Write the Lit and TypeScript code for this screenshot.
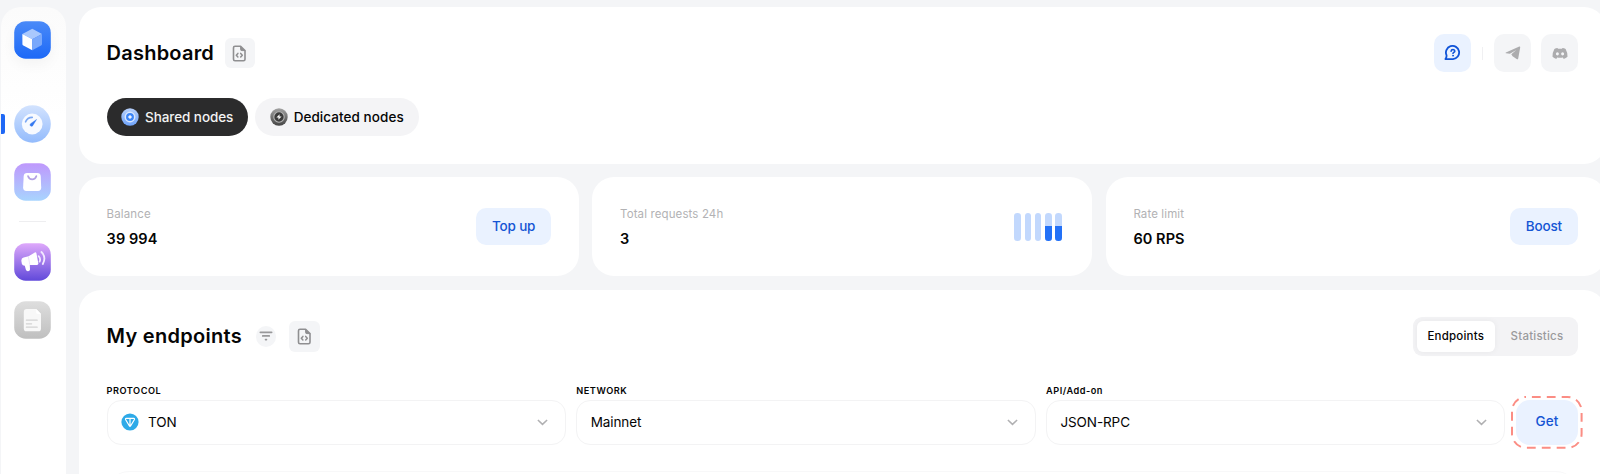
import { LitElement, html, css, svg } from 'lit';
import { customElement, property } from 'lit/decorators.js';

const codeFile = html`<svg width="15" height="17" viewBox="0 0 15 17" fill="none" stroke="#8f8f91" stroke-width="1.6" stroke-linecap="round" stroke-linejoin="round">
  <path d="M3 1.2H8.6L13 5.6V14.2Q13 15.7 11.5 15.7H3Q1.5 15.7 1.5 14.2V2.7Q1.5 1.2 3 1.2Z"/>
  <path d="M8.6 1.4V4.4Q8.6 5.6 9.8 5.6H12.8" fill="#8f8f91" stroke-width="1"/>
  <path d="M5.9 8.4L4.3 10.2L5.9 12M8.7 8.4L10.3 10.2L8.7 12" stroke-width="1.5"/></svg>`;

const chevron = html`<svg width="11" height="7" viewBox="0 0 11 7" fill="none" stroke="#b0b0b2" stroke-width="1.5"><path d="M.9 1L5.5 5.4L10.1 1"/></svg>`;

const shell = (id: string, stops: [string, string], body: unknown, round = 11.5) => html`
  <svg width="37" height="38" viewBox="0 0 37 38">
    <defs><linearGradient id=${id} x1="0" y1="0" x2="0" y2="1"><stop stop-color=${stops[0]}/><stop offset="1" stop-color=${stops[1]}/></linearGradient></defs>
    <rect x=".2" y=".2" width="36.6" height="37.5" rx=${round} fill="url(#${id})"/>
    ${body}
  </svg>`;

const logo = shell('logo', ['#4a8af8', '#1d69f7'], svg`
  <path d="M18.3 7.8L28 13L18.3 18.3L8.4 13Z" fill="#a9c8fd"/>
  <path d="M8.4 13L18.3 18.3V29.3L9.4 24.6Q8.4 24 8.4 23Z" fill="#fff"/>
  <path d="M28 13L18.3 18.3V29.3L27 24.6Q28 24 28 23Z" fill="#79a8fb"/>`);

const gauge = shell('gauge', ['#d3e3fe', '#93bbfc'], svg`
  <circle cx="18.2" cy="19" r="10.4" fill="#f7faff"/>
  <path d="M11.6 16.8Q13.2 12.4 18.2 12.3" fill="none" stroke="#7ba8f4" stroke-width="1.7" stroke-linecap="round"/>
  <path d="M22.6 14.4L19 20.2A1.5 1.5 0 1 1 16.8 18.5Z" fill="#3478f0" stroke="#3478f0" stroke-width=".4" stroke-linejoin="round"/>`, 18.6);

const bag = shell('bag', ['#bf98fc', '#a8d4fe'], svg`
  <path d="M13 10H23.3Q26.5 10 26.7 13L27.2 24.6Q27.2 28 24 28H12.4Q9.1 28 9.1 24.6L9.7 13Q9.9 10 13 10Z" fill="#fff"/>
  <path d="M14 13Q15 16.4 18.2 16.4T22.4 13" fill="none" stroke="#b3a1e4" stroke-width="1.7" stroke-linecap="round"/>`);

const megaphone = shell('mega', ['#dfa9fb', '#6149da'], svg`
  <path d="M7.4 18.2Q7 15.4 9.6 14.6L14.6 13.3L20.8 9.4Q22.1 8.8 22.4 10.2L24.4 20.6Q24.4 22 23 22L15.8 21.9L16 26.5Q15.8 28.2 14 28.2Q12.4 28.3 11.9 26.8L10.8 22.8Q8.4 22.8 7.9 21Z" fill="#fff"/>
  <path d="M14.4 13.6L15.8 21.8" stroke="#eadbfa" stroke-width=".8"/>
  <path d="M24.6 13.1Q27 15.5 25.6 18.6M27.4 9Q32.6 14 28.8 21" fill="none" stroke="#f2e9ff" stroke-width="1.8" stroke-linecap="round"/>`);

const doc = shell('doc', ['#dedede', '#bfbfbf'], svg`
  <path d="M12.6 8H22.2L27 13V27.4Q27 30.3 24.2 30.3H12.6Q9.8 30.3 9.8 27.4V10.9Q9.8 8 12.6 8Z" fill="#f8f8f8"/>
  <path d="M22.2 8L27 13H24Q22.2 13 22.2 11.2Z" fill="#fff"/>
  <path d="M12.4 19.2H23.2M12.4 22.8H17.6M12.4 26.2H23.2" stroke="#d2d2d2" stroke-width="1.2" stroke-linecap="round"/>`);

const sharedIcon = html`<svg width="18" height="18" viewBox="0 0 18 18">
  <defs><linearGradient id="sh" x1="0" y1="0" x2="0" y2="1"><stop stop-color="#b7d0fb"/><stop offset="1" stop-color="#6fa3fa"/></linearGradient></defs>
  <circle cx="9" cy="9" r="8.7" fill="url(#sh)"/><circle cx="9" cy="9" r="4.7" fill="#3d86f8" stroke="#d9e7fe" stroke-width="1.5"/>
  <path d="M9 7.2L9.7 8.3L10.8 9L9.7 9.7L9 10.8L8.3 9.7L7.2 9L8.3 8.3Z" fill="#fff" stroke="#fff" stroke-width=".5"/></svg>`;

const dedicatedIcon = html`<svg width="18" height="18" viewBox="0 0 18 18">
  <defs><linearGradient id="de" x1="0" y1="0" x2="0" y2="1"><stop stop-color="#a3a3a3"/><stop offset="1" stop-color="#444"/></linearGradient></defs>
  <circle cx="9" cy="9" r="8.7" fill="url(#de)"/><circle cx="9" cy="9" r="5.2" fill="#3b3b3b" stroke="#b5b5b5" stroke-width="1.1"/>
  <path d="M9.7 6.2L6.4 9.5H8.6L8.3 11.8L11.6 8.5H9.4Z" fill="#fff"/></svg>`;

const tonIcon = html`<svg width="18" height="18" viewBox="0 0 18 18"><circle cx="9" cy="9" r="8.6" fill="#2eaae8"/>
  <path d="M5.3 5.3H12.7Q13.9 5.5 13.3 6.7L9.4 13.2Q9 13.7 8.6 13.2L4.7 6.7Q4.1 5.5 5.3 5.3ZM9 5.3V13" fill="none" stroke="#fff" stroke-width="1.2" stroke-linejoin="round"/></svg>`;

const helpIcon = html`<svg width="17" height="16" viewBox="0 0 17 16" fill="none" stroke="#0f53d8" stroke-linecap="round" stroke-linejoin="round">
  <path d="M2.5 10.2A6.6 6.6 0 1 1 9 14.1H1.4Q2.8 12.4 2.5 10.2Z" stroke-width="1.8"/>
  <path d="M7.1 6.2Q7.2 4.5 9 4.5Q10.8 4.6 10.8 6.1Q10.7 7.2 9.5 7.6Q9 7.9 9 8.5" stroke-width="1.6"/><circle cx="9" cy="10.7" r=".5" fill="#0f53d8" stroke-width=".9"/></svg>`;

const telegramIcon = html`<svg width="16" height="14" viewBox="0 0 16 14"><path d="M.9 6.4L14.3 .6Q15.3 .3 15.2 1.4L13.2 12.4Q12.9 13.8 11.6 13.1L7.6 10.2L6.3 8.2L11.3 4.1L4.9 7.7L1 7.3Q0 6.9 .9 6.4Z" fill="#acacae"/></svg>`;

const discordIcon = html`<svg width="16" height="13" viewBox="0 0 16 13"><path fill-rule="evenodd" d="M5.5 .9L6 1.8Q8 1.5 10 1.8L10.5 .9Q12.1 1 13.6 1.9Q15.6 5.2 15.5 9.8Q13.9 11.4 11.7 11.9L10.9 10.5Q8 11.2 5.1 10.5L4.3 11.9Q2.1 11.4 .5 9.8Q.4 5.2 2.4 1.9Q3.9 1 5.5 .9ZM5.4 5.2A1.5 1.6 0 1 0 5.4 8.4A1.5 1.6 0 1 0 5.4 5.2ZM10.6 5.2A1.5 1.6 0 1 0 10.6 8.4A1.5 1.6 0 1 0 10.6 5.2Z" fill="#acacae"/></svg>`;

@customElement('select-field')
class SelectField extends LitElement {
  @property() label = '';
  @property() value = '';
  @property({ attribute: false }) icon: unknown = null;
  static styles = css`
    :host { display: block; flex: 1; }
    .label { height: 19.2px; line-height: 19.6px; font-size: 9.2px; font-weight: 600; letter-spacing: .5px; }
    .box { height: 44.5px; box-sizing: border-box; border: 1px solid #f3f3f4; border-radius: 14px; display: flex; align-items: center; padding: 0 17px 0 13.4px; }
    .value { flex: 1; font-size: 13.5px; letter-spacing: -.1px; }
    .icon { margin: 0 9px 0 0; display: flex; }
  `;
  render() {
    return html`<div class="label">${this.label}</div>
      <div class="box">${this.icon ? html`<span class="icon">${this.icon}</span>` : ''}<span class="value">${this.value}</span>${chevron}</div>`;
  }
}

@customElement('app-root')
class AppRoot extends LitElement {
  static styles = css`
    :host { display: flex; width: 1600px; height: 474px; overflow: hidden; background: #f4f5f7; color: #050505; font-family: Inter, "Noto Sans", sans-serif; box-sizing: border-box; padding: 7px 0 0 1px; gap: 13.5px; }
    svg { display: block; flex: none; }
    .side { position: relative; flex: none; width: 64.5px; height: 500px; background: linear-gradient(#fbfbfb, #fff 110px); border-radius: 20px; display: flex; flex-direction: column; align-items: center; box-sizing: border-box; padding: 13.7px 1.2px 0 0; }
    .logo { margin-bottom: 46.4px; border-radius: 11.5px; box-shadow: 0 6px 14px rgba(0,0,0,.04); }
    .nav { display: flex; flex-direction: column; align-items: center; gap: 19.9px; }
    .rule { width: 27px; height: 1px; background: #eeeef0; margin: 0 0 1.2px; }
    .active { position: absolute; left: 0; top: 107px; width: 3.6px; height: 20px; background: #1f68f5; border-radius: 0 2px 2px 0; }
    .main { flex: none; width: 1527px; display: flex; flex-direction: column; gap: 13.6px; }
    .card { flex: none; background: #fff; border-radius: 22px; box-sizing: border-box; padding: 0 27.6px 0 27.6px; }
    .top { height: 156.6px; padding-top: 27px; }
    .row { display: flex; align-items: center; }
    .spread { justify-content: space-between; }
    h1 { margin: 0; font-size: 20px; line-height: 24px; font-weight: 600; letter-spacing: .22px; }
    .tile { width: 30.6px; height: 30.6px; border-radius: 6px; background: #f4f5f7; display: flex; align-items: center; justify-content: center; }
    .head { height: 38px; }
    .head .tile { margin-left: 10.6px; }
    .socials { display: flex; align-items: center; }
    .sq { width: 37px; height: 37.6px; border-radius: 10px; background: #f4f5f7; display: flex; align-items: center; justify-content: center; }
    .sq.blue { background: #eaf2ff; }
    .bar { width: 1.6px; height: 13px; background: #f0f0f2; margin: 0 10.6px 0 10.8px; }
    .sq + .sq { margin-left: 10.4px; }
    .pills { display: flex; gap: 7px; margin-top: 26.4px; }
    .pill { height: 37.8px; border-radius: 19px; display: flex; align-items: center; box-sizing: border-box; font-size: 13.5px; font-weight: 500; background: #f4f4f6; width: 163.7px; padding-left: 14.4px; gap: 6.1px; letter-spacing: .06px; white-space: nowrap; }
    .pill.dark { background: #2b2b2c; color: #f3f3f3; width: 141.6px; letter-spacing: -.08px; }
    .stats { display: flex; gap: 13.4px; flex: none; }
    .stat { width: 500px; height: 99px; display: flex; align-items: center; justify-content: space-between; }
    .k { font-size: 11.5px; line-height: 16px; color: #b2b2b4; letter-spacing: .12px; margin-bottom: 8px; }
    .v { font-size: 14.5px; line-height: 18px; font-weight: 600; letter-spacing: .08px; }
    .btn { height: 37.4px; border-radius: 10px; background: #eaf2ff; color: #1555d4; font-size: 13.5px; font-weight: 500; display: flex; align-items: center; justify-content: center; box-sizing: border-box; padding-bottom: 2px; letter-spacing: -.15px; }
    .topup { width: 75.6px; } .boost { width: 68.6px; }
    .bars { display: flex; gap: 3.6px; margin-right: 3px; }
    .col { width: 6.6px; height: 28px; border-radius: 3.3px; background: #c2d8fd; overflow: hidden; display: flex; align-items: flex-end; }
    .fill { width: 100%; background: #2371f7; }
    .ends { height: 300px; padding-top: 27.2px; }
    .ends .head { height: 39px; }
    .ends h1 { letter-spacing: .28px; }
    .round { width: 20.6px; height: 20.6px; border-radius: 50%; background: #f4f5f7; display: flex; align-items: center; justify-content: center; margin-left: 13.6px; }
    .ends .tile { margin-left: 13px; }
    .seg { width: 165.4px; height: 39px; border-radius: 9px; background: #f3f3f5; box-sizing: border-box; padding: 4px; display: flex; font-size: 11.5px; font-weight: 500; letter-spacing: .22px; color: #9a9a9c; }
    .seg span { display: flex; align-items: center; justify-content: center; flex: 1; padding-left: 5px; }
    .seg .on { flex: none; width: 77.6px; box-sizing: border-box; padding-left: 0; background: #fff; color: #050505; border-radius: 6px; box-shadow: 0 0 6px rgba(0,0,0,.05); }
    .fields { display: flex; align-items: flex-end; gap: 10.4px; margin-top: 25px; }
    .get { position: relative; width: 62.6px; height: 44.5px; border-radius: 14px; letter-spacing: .13px; }
    .dash { position: absolute; left: -4.4px; top: -4.3px; }
    .panel { margin-top: 26.4px; height: 60px; border: 1px solid #f8f8f9; border-radius: 22px; }
  `;
  render() {
    return html`
      <nav class="side">
        <div class="logo">${logo}</div>
        <div class="nav">${gauge}${bag}<div class="rule"></div>${megaphone}${doc}</div>
        <div class="active"></div>
      </nav>
      <main class="main">
        <section class="card top">
          <div class="row head spread">
            <div class="row"><h1>Dashboard</h1><div class="tile">${codeFile}</div></div>
            <div class="socials"><div class="sq blue">${helpIcon}</div><div class="bar"></div><div class="sq">${telegramIcon}</div><div class="sq">${discordIcon}</div></div>
          </div>
          <div class="pills"><div class="pill dark">${sharedIcon}<span>Shared nodes</span></div><div class="pill">${dedicatedIcon}<span>Dedicated nodes</span></div></div>
        </section>
        <section class="stats">
          <div class="card stat"><div><div class="k">Balance</div><div class="v">39 994</div></div><div class="btn topup">Top up</div></div>
          <div class="card stat"><div><div class="k">Total requests 24h</div><div class="v">3</div></div>
            <div class="bars">${[0, 0, 0, 52, 52].map(h => html`<div class="col"><div class="fill" style="height:${h}%"></div></div>`)}</div></div>
          <div class="card stat"><div><div class="k">Rate limit</div><div class="v">60 RPS</div></div><div class="btn boost">Boost</div></div>
        </section>
        <section class="card ends">
          <div class="row head spread">
            <div class="row"><h1>My endpoints</h1>
              <div class="round"><svg width="14" height="10" viewBox="0 0 14 10" stroke="#98989a" stroke-width="1.8" stroke-linecap="round"><path d="M1.4 1.3H12.6M3.8 4.9H10.2M6.6 8.6H7.4"/></svg></div>
              <div class="tile">${codeFile}</div></div>
            <div class="seg"><span class="on">Endpoints</span><span>Statistics</span></div>
          </div>
          <div class="fields">
            <select-field label="PROTOCOL" value="TON" .icon=${tonIcon}></select-field>
            <select-field label="NETWORK" value="Mainnet"></select-field>
            <select-field label="API/Add-on" value="JSON-RPC"></select-field>
            <div class="btn get">Get<svg class="dash" width="72" height="53" viewBox="0 0 72 53" fill="none"><rect x="1" y="1" width="69.6" height="50.8" rx="14" stroke="#fb8d84" stroke-width="2" stroke-dasharray="8.8 6.1" stroke-dashoffset="9"/></svg></div>
          </div>
          <div class="panel"></div>
        </section>
      </main>`;
  }
}
